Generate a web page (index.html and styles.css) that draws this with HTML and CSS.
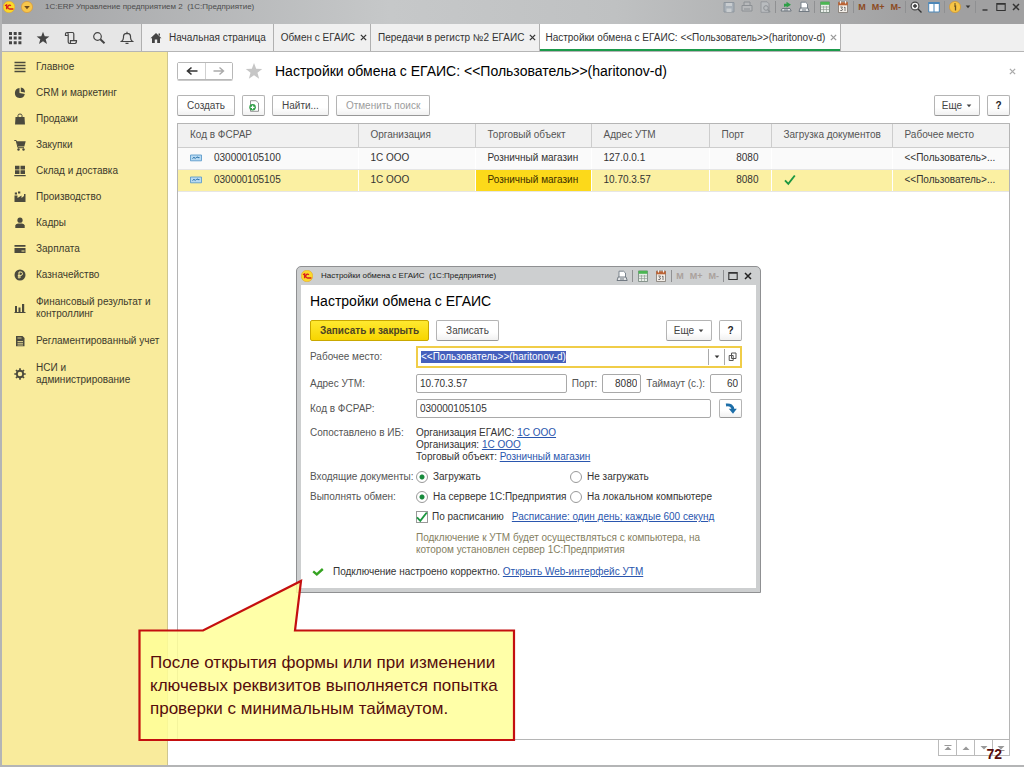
FILE: index.html
```html
<!DOCTYPE html>
<html lang="ru">
<head>
<meta charset="utf-8">
<title>1С:ERP Управление предприятием 2</title>
<link rel="stylesheet" href="styles.css">
</head>
<body>
<svg class="defs" aria-hidden="true">
  <symbol id="logo" viewBox="0 0 12 12"><circle cx="6" cy="6" r="5.8" fill="#fbd92a" stroke="#e8a92c" stroke-width=".6"/><path d="M2 4.8 3.6 3.8V8.3M7.9 4.7A1.9 1.9 0 1 0 6.6 8H10.4" fill="none" stroke="#d8201c" stroke-width="1.3"/></symbol>
  <symbol id="drop" viewBox="0 0 12 12"><circle cx="6" cy="6" r="5.6" fill="#f7c64a" stroke="#d99a3a" stroke-width=".7"/><path d="M3.2 5h5.6L6 8.2z" fill="#6b4a1c"/></symbol>
  <symbol id="apps" viewBox="0 0 14 14"><path d="M1 1h3v3H1zM5.7 1h3v3h-3zM10.4 1h3v3h-3zM1 5.6h3v3H1zM5.7 5.6h3v3h-3zM10.4 5.6h3v3h-3zM1 10.2h3v3H1zM5.7 10.2h3v3h-3zM10.4 10.2h3v3h-3z" fill="#444"/></symbol>
  <symbol id="star" viewBox="0 0 14 14"><path d="M7 .8 8.7 5.3l4.7.1-3.7 2.9 1.3 4.7L7 10.3 3 13l1.300-4.700L.6 5.400l4.700-.1z" fill="currentColor"/></symbol>
  <symbol id="scroll" viewBox="0 0 14 14"><path d="M3.500 4.500H1.500V2.800Q1.500 1.500 3 1.500H8.500Q9.800 1.500 9.800 3V9.500M3 1.500Q4.200 1.800 4.200 3.200V11Q4.200 12.500 5.800 12.500H11Q12.500 12.300 12.500 9.700H6.500V11Q6.500 12.300 5.500 12.500" fill="none" stroke="#444" stroke-width="1.200"/></symbol>
  <symbol id="search" viewBox="0 0 14 14"><circle cx="5.500" cy="5.500" r="3.800" fill="none" stroke="#444" stroke-width="1.200"/><path d="m8.300 8.300 4.200 4" stroke="#444" stroke-width="2"/></symbol>
  <symbol id="bell" viewBox="0 0 14 14"><path d="M1.500 10.500Q3.500 9 3.500 6.500V5Q3.800 2.500 7 2.400 10.200 2.500 10.500 5V6.500Q10.500 9 12.500 10.500zM7 2.300V.8M5.500 12.300h3" fill="none" stroke="#444" stroke-width="1.200"/></symbol>
  <symbol id="home" viewBox="0 0 12 12"><path d="M6 1 11.500 6.300H10V11H7.200V7.500H4.800V11H2V6.300H.5zM8.500 1.500H10V4L8.500 2.800z" fill="#444"/></symbol>
  <symbol id="i-menu" viewBox="0 0 12 12"><path d="M.5 1.500h11M.5 4.500h11M.5 7.500h11M.5 10.500h11" stroke="#4b4a3d" stroke-width="1.500"/></symbol>
  <symbol id="i-pie" viewBox="0 0 12 12"><path d="M5.500 1A5 5 0 1 0 10.800 7L5.500 6zM6.800.6V4.800L11 5.500A5 5 0 0 0 6.800.6z" fill="#4b4a3d"/></symbol>
  <symbol id="i-bag" viewBox="0 0 12 12"><path d="M1.500 4h9l.5 7.500H1z" fill="#4b4a3d"/><path d="M4 6V2.500Q4 1 6 1T8 2.500V6" fill="none" stroke="#4b4a3d"/></symbol>
  <symbol id="i-cart" viewBox="0 0 12 12"><path d="M.3 1.500H2.200L4 8.700H10" fill="none" stroke="#4b4a3d"/><path d="M2.500 2.200h9.200L10.300 7.500H3.800z" fill="#4b4a3d"/><circle cx="4.500" cy="10.500" r="1.200" fill="#4b4a3d"/><circle cx="9.500" cy="10.500" r="1.200" fill="#4b4a3d"/></symbol>
  <symbol id="i-boxes" viewBox="0 0 12 12"><path d="M1 .8h4.500v3.700H1zM6.500.8H11v3.700H6.500zM1 5.300h4.500V9H1zM6.500 5.300H11V9H6.500zM.3 10h11.400v1.300H.3z" fill="#4b4a3d"/></symbol>
  <symbol id="i-factory" viewBox="0 0 12 12"><path d="M.5 11V4.500H3.500V7L7.500 4.500V7L10 5V3h1.500v8zM.8 1.500H3V3.500H.8zM4 .5H6.300V2.500H4z" fill="#4b4a3d"/></symbol>
  <symbol id="i-person" viewBox="0 0 12 12"><circle cx="6" cy="3.200" r="2.600" fill="#4b4a3d"/><path d="M1.300 11V8.500Q1.500 6.800 4 6.500H8Q10.500 6.800 10.700 8.500V11z" fill="#4b4a3d"/></symbol>
  <symbol id="i-card" viewBox="0 0 12 12"><path d="M.5 2h11v1.800H.5zM.5 5h11v5H.5z" fill="#4b4a3d"/><path d="M7.500 8h3" stroke="#f9eb9c"/></symbol>
  <symbol id="i-coin" viewBox="0 0 12 12"><circle cx="6" cy="6" r="5.500" fill="#4b4a3d"/><path d="M5 9.500V3H7Q8.500 3.200 8.500 4.700T7 6.400H3.800M3.800 8H7" fill="none" stroke="#f9eb9c"/></symbol>
  <symbol id="i-bars" viewBox="0 0 12 12"><path d="M1 4h2v6H1zM4.500 5.500h2V10h-2zM8 2h2.200v8H8zM.5 10h11v1H.5z" fill="#4b4a3d"/></symbol>
  <symbol id="i-calc" viewBox="0 0 12 12"><path d="M2 1h6.500L10.500 3v8.300H2z" fill="#4b4a3d"/><path d="M3.500 3h4M3.500 6.500h5.500M3.500 8.300h5.500M3.500 10h5.500" stroke="#f9eb9c" stroke-width=".8"/></symbol>
  <symbol id="i-gear" viewBox="0 0 12 12"><circle cx="6" cy="6" r="3.200" fill="none" stroke="#4b4a3d" stroke-width="1.900"/><path d="M6 .3v2M6 9.700v2M.3 6h2M9.700 6h2M2 2l1.400 1.400M8.600 8.600 10 10M10 2 8.600 3.400M3.400 8.600 2 10" stroke="#4b4a3d" stroke-width="1.700"/></symbol>
  <symbol id="arrow-l" viewBox="0 0 12 10"><path d="M11.500 5H2M5.500 1.500 1.500 5l4 3.500" fill="none" stroke="currentColor" stroke-width="1.600"/></symbol>
  <symbol id="arrow-r" viewBox="0 0 12 10"><path d="M.5 5H10M6.500 1.500l4 3.500-4 3.500" fill="none" stroke="currentColor" stroke-width="1.400"/></symbol>
  <symbol id="doc-add" viewBox="0 0 12 12"><path d="M2.500.7H8L10.500 3v8.300h-8z" fill="#fff" stroke="#777" stroke-width=".8"/><circle cx="4.600" cy="7.300" r="3.300" fill="#2f9f47"/><path d="M4.600 5.400v3.800M2.700 7.300h3.800" stroke="#fff" stroke-width="1.200"/></symbol>
  <symbol id="record" viewBox="0 0 12 8"><path d="M.5 1h11v5.800H.5z" fill="#b8daf2" stroke="#5f9ccc" stroke-width=".9"/><path d="M2.500 4.500 4 3.300 5.300 4.500 7 2.800 8 3.600H9.500" fill="none" stroke="#2870a8"/></symbol>
  <symbol id="tick" viewBox="0 0 12 12"><path d="m1 6.300 3.300 3.500L10.800 1.500" fill="none" stroke="#1d9741" stroke-width="1.900"/></symbol>
  <symbol id="tick-bold" viewBox="0 0 12 12"><path d="m1.200 5.300 3.600 3L10.800 3" fill="none" stroke="#35a321" stroke-width="2.400"/></symbol>
  <symbol id="save" viewBox="0 0 12 12"><path d="M1 1.500h10v9.500H1z" fill="#a8b0b8" stroke="#8e969e"/><path d="M3 2h6v3H3zM3.500 7.500h5V11h-5z" fill="#c9cdd0"/></symbol>
  <symbol id="print" viewBox="0 0 12 12"><path d="M3 1h6v3.500h2V10H1V4.500h2zM3 4.500h6M3 8h6" fill="#b7b9bb" stroke="#8c9094"/></symbol>
  <symbol id="preview" viewBox="0 0 12 12"><path d="M2 .8h6l2 2v8.500H2z" fill="#b9bcbf" stroke="#8d9195" stroke-width=".8"/><circle cx="7" cy="7" r="2.300" fill="none" stroke="#8d9195"/><path d="m8.800 8.800 2.400 2.400" stroke="#8d9195" stroke-width="1.300"/></symbol>
  <symbol id="link-up" viewBox="0 0 12 12"><path d="M4 6V2.800h2.500V.8L11 3.800 6.500 6.500V5" fill="#2e9f48"/><path d="M1 10 2.200 7.500H10L11.200 10zM4 9h4" fill="#e3e5e7" stroke="#666f78" stroke-width=".9"/></symbol>
  <symbol id="link-doc" viewBox="0 0 12 12"><path d="M3 7V1.200h4.500L9.500 3v4" fill="#fff" stroke="#707a84" stroke-width=".9"/><path d="M1 10.500 2.200 7H10L11.200 10.500zM4 9h4" fill="#e3e5e7" stroke="#666f78" stroke-width=".9"/></symbol>
  <symbol id="table" viewBox="0 0 12 12"><path d="M1.500 1h9v10.500h-9z" fill="#e9efe9" stroke="#718078" stroke-width=".8"/><path d="M1.500.8h9v3h-9z" fill="#4bb653"/><path d="M4.500 5v6M7.500 5v6M2 6h8M2 8.500h8" stroke="#89948d" stroke-width=".6"/></symbol>
  <symbol id="calendar" viewBox="0 0 12 12"><path d="M1.500 1h9v10.500h-9z" fill="#f3eee8" stroke="#7e7670" stroke-width=".8"/><path d="M1.200 1.300h9.600v3H1.200z" fill="#ba6335"/><path d="M3.500 0v2.500M8.500 0v2.500" stroke="#eee"/><path d="M3.300 6H5.500L4.500 7.500 5.500 8 5 9.500H3.300M7 6.700 8 6V10" fill="none" stroke="#555" stroke-width=".8"/></symbol>
  <symbol id="zoom-in" viewBox="0 0 12 12"><circle cx="5" cy="5" r="3.900" fill="#eee" stroke="#444" stroke-width="1.100"/><path d="M5 3v4M3 5h4M8 8l3.500 3.500" stroke="#333" stroke-width="1.400"/></symbol>
  <symbol id="panels" viewBox="0 0 12 12"><path d="M.7 1.500h10.600v9.500H.7z" fill="#fff" stroke="#4c87b8"/><path d="M.5 1h11v2H.5zM5.500 2h1v9h-1z" fill="#4c87b8"/></symbol>
  <symbol id="info" viewBox="0 0 12 12"><circle cx="6" cy="6" r="5.600" fill="#f6c445" stroke="#cf9634" stroke-width=".7"/><path d="M5.200 5h1.300v4.500M6 2.300v1.500" fill="none" stroke="#685020" stroke-width="1.300"/></symbol>
  <symbol id="max" viewBox="0 0 10 10"><path d="M.8 1.500h8.400v7H.8zM.8 2.200h8.400" fill="none" stroke="#333" stroke-width="1.100"/></symbol>
  <symbol id="cross" viewBox="0 0 8 8"><path d="m1 1 6 6M7 1 1 7" stroke="currentColor" stroke-width="1.500"/></symbol>
  <symbol id="min" viewBox="0 0 10 10"><path d="M2.500 8h5" stroke="#333" stroke-width="1.400"/></symbol>
  <symbol id="caret" viewBox="0 0 6 4"><path d="M.7.5h4.600L3 3.300z" fill="currentColor"/></symbol>
  <symbol id="open" viewBox="0 0 10 10"><path d="M3.500 1h4.500v5.500H3.500zM1.200 3.500h4v5h-4z" fill="#fff" stroke="#555"/></symbol>
  <symbol id="turn" viewBox="0 0 12 12"><path d="M1 2Q7.500 1 8 7" fill="none" stroke="#1c6ea8" stroke-width="2.800"/><path d="M3.800 5.800h8L8 10.800z" fill="#1c6ea8"/></symbol>
  <symbol id="nav-up" viewBox="0 0 8 8"><path d="M4 2.500 7.500 6h-7z" fill="#999"/></symbol>
  <symbol id="nav-down" viewBox="0 0 8 8"><path d="M4 5.500 7.500 2h-7z" fill="#999"/></symbol>
  <symbol id="nav-top" viewBox="0 0 8 8"><path d="M4 2.500 7.500 6h-7zM.5 1h7v1h-7z" fill="#999"/></symbol>
  <symbol id="nav-end" viewBox="0 0 8 8"><path d="M4 5.500 7.500 2h-7zM.5 6h7v1h-7z" fill="#999"/></symbol>
</svg>

<div class="app">
  <header class="titlebar">
    <svg class="ic12"><use href="#logo"/></svg>
    <button class="bare" aria-label="Главное меню"><svg class="ic12"><use href="#drop"/></svg></button>
    <span class="titlebar-text">1С:ERP Управление предприятием 2&nbsp; (1С:Предприятие)</span>
    <div class="tools">
      <button class="bare" aria-label="Сохранить"><svg class="ic12"><use href="#save"/></svg></button>
      <button class="bare" aria-label="Печать"><svg class="ic12"><use href="#print"/></svg></button>
      <button class="bare" aria-label="Просмотр"><svg class="ic12"><use href="#preview"/></svg></button>
      <i class="sep"></i>
      <button class="bare" aria-label="Перейти по ссылке"><svg class="ic12"><use href="#link-up"/></svg></button>
      <button class="bare" aria-label="Получить ссылку"><svg class="ic12"><use href="#link-doc"/></svg></button>
      <i class="sep"></i>
      <button class="bare" aria-label="Калькулятор"><svg class="ic12"><use href="#table"/></svg></button>
      <button class="bare" aria-label="Календарь"><svg class="ic12"><use href="#calendar"/></svg></button>
      <i class="sep"></i>
      <span class="memory"><button class="bare">M</button><button class="bare">M+</button><button class="bare">M-</button></span>
      <i class="sep"></i>
      <button class="bare" aria-label="Масштаб"><svg class="ic12"><use href="#zoom-in"/></svg></button>
      <button class="bare" aria-label="Панели"><svg class="ic12"><use href="#panels"/></svg></button>
      <i class="sep"></i>
      <button class="bare info" aria-label="О программе"><svg class="ic12"><use href="#info"/></svg><svg class="caret"><use href="#caret"/></svg></button>
      <i class="sep"></i>
      <button class="bare" aria-label="Свернуть"><svg class="ic10"><use href="#min"/></svg></button>
      <button class="bare" aria-label="Развернуть"><svg class="ic10"><use href="#max"/></svg></button>
      <button class="bare" aria-label="Закрыть"><svg class="ic8"><use href="#cross"/></svg></button>
    </div>
  </header>

  <nav class="tabs">
    <div class="quick">
      <button class="bare" aria-label="Функции"><svg class="ic14"><use href="#apps"/></svg></button>
      <button class="bare" aria-label="Избранное"><svg class="ic14"><use href="#star"/></svg></button>
      <button class="bare" aria-label="История"><svg class="ic14"><use href="#scroll"/></svg></button>
      <button class="bare" aria-label="Поиск"><svg class="ic14"><use href="#search"/></svg></button>
      <button class="bare" aria-label="Оповещения"><svg class="ic14"><use href="#bell"/></svg></button>
    </div>
    <a class="tab tab-home" href="#"><svg class="ic12"><use href="#home"/></svg>Начальная страница</a>
    <a class="tab" href="#">Обмен с ЕГАИС<svg class="tab-x"><use href="#cross"/></svg></a>
    <a class="tab" href="#">Передачи в регистр №2 ЕГАИС<svg class="tab-x"><use href="#cross"/></svg></a>
    <a class="tab tab-active" href="#">Настройки обмена с ЕГАИС: &lt;&lt;Пользователь&gt;&gt;(haritonov-d)<svg class="tab-x"><use href="#cross"/></svg></a>
  </nav>

  <div class="work">
    <aside class="sidebar">
      <a class="section" href="#"><svg class="ic12"><use href="#i-menu"/></svg>Главное</a>
      <a class="section" href="#"><svg class="ic12"><use href="#i-pie"/></svg>CRM и маркетинг</a>
      <a class="section" href="#"><svg class="ic12"><use href="#i-bag"/></svg>Продажи</a>
      <a class="section" href="#"><svg class="ic12"><use href="#i-cart"/></svg>Закупки</a>
      <a class="section" href="#"><svg class="ic12"><use href="#i-boxes"/></svg>Склад и доставка</a>
      <a class="section" href="#"><svg class="ic12"><use href="#i-factory"/></svg>Производство</a>
      <a class="section" href="#"><svg class="ic12"><use href="#i-person"/></svg>Кадры</a>
      <a class="section" href="#"><svg class="ic12"><use href="#i-card"/></svg>Зарплата</a>
      <a class="section" href="#"><svg class="ic12"><use href="#i-coin"/></svg>Казначейство</a>
      <a class="section section-tall" href="#"><svg class="ic12"><use href="#i-bars"/></svg>Финансовый результат и контроллинг</a>
      <a class="section" href="#"><svg class="ic12"><use href="#i-calc"/></svg>Регламентированный учет</a>
      <a class="section section-tall" href="#"><svg class="ic12"><use href="#i-gear"/></svg>НСИ и<br>администрирование</a>
    </aside>

    <main class="page">
      <div class="page-head">
        <div class="history"><button aria-label="Назад"><svg class="arrow"><use href="#arrow-l"/></svg></button><button aria-label="Вперед" disabled><svg class="arrow"><use href="#arrow-r"/></svg></button></div>
        <svg class="fav"><use href="#star"/></svg>
        <h1>Настройки обмена с ЕГАИС: &lt;&lt;Пользователь&gt;&gt;(haritonov-d)</h1>
        <button class="bare page-x" aria-label="Закрыть страницу"><svg class="ic8"><use href="#cross"/></svg></button>
      </div>
      <div class="commands">
        <button class="btn">Создать</button>
        <button class="btn btn-icon" aria-label="Создать копированием"><svg class="ic12"><use href="#doc-add"/></svg></button>
        <button class="btn">Найти...</button>
        <button class="btn" disabled>Отменить поиск</button>
        <span class="grow"></span>
        <button class="btn btn-more">Еще<svg class="caret"><use href="#caret"/></svg></button>
        <button class="btn btn-help">?</button>
      </div>
      <div class="list">
        <table>
          <colgroup><col class="c-code"><col class="c-org"><col class="c-obj"><col class="c-addr"><col class="c-port"><col class="c-load"><col class="c-place"></colgroup>
          <thead>
            <tr><th>Код в ФСРАР</th><th>Организация</th><th>Торговый объект</th><th>Адрес УТМ</th><th>Порт</th><th>Загрузка документов</th><th>Рабочее место</th></tr>
          </thead>
          <tbody>
            <tr><td><span class="code"><svg><use href="#record"/></svg>030000105100</span></td><td>1С ООО</td><td>Розничный магазин</td><td>127.0.0.1</td><td class="num">8080</td><td></td><td>&lt;&lt;Пользователь&gt;...</td></tr>
            <tr class="selected"><td><span class="code"><svg><use href="#record"/></svg>030000105105</span></td><td>1С ООО</td><td class="current">Розничный магазин</td><td>10.70.3.57</td><td class="num">8080</td><td><svg class="ic12"><use href="#tick"/></svg></td><td>&lt;&lt;Пользователь&gt;...</td></tr>
          </tbody>
        </table>
      </div>
      <div class="pager">
        <button aria-label="В начало"><svg class="ic8"><use href="#nav-top"/></svg></button><button aria-label="Вверх"><svg class="ic8"><use href="#nav-up"/></svg></button><button aria-label="Вниз"><svg class="ic8"><use href="#nav-down"/></svg></button><button aria-label="В конец"><svg class="ic8"><use href="#nav-end"/></svg></button>
      </div>
    </main>
  </div>
</div>

<section class="dialog" role="dialog" aria-labelledby="dialog-title">
  <header class="dialog-bar">
    <svg class="ic12"><use href="#logo"/></svg>
    <span class="dialog-caption">Настройки обмена с ЕГАИС&nbsp; (1С:Предприятие)</span>
    <div class="tools">
      <button class="bare" aria-label="Получить ссылку"><svg class="ic12"><use href="#link-doc"/></svg></button>
      <i class="sep"></i>
      <button class="bare" aria-label="Калькулятор"><svg class="ic12"><use href="#table"/></svg></button>
      <button class="bare" aria-label="Календарь"><svg class="ic12"><use href="#calendar"/></svg></button>
      <i class="sep"></i>
      <span class="memory memory-off"><button class="bare">M</button><button class="bare">M+</button><button class="bare">M-</button></span>
      <i class="sep"></i>
      <button class="bare" aria-label="Развернуть окно"><svg class="ic10"><use href="#max"/></svg></button>
      <button class="bare" aria-label="Закрыть окно"><svg class="ic8"><use href="#cross"/></svg></button>
    </div>
  </header>
  <form class="form">
    <h2 id="dialog-title">Настройки обмена с ЕГАИС</h2>
    <div class="form-commands">
      <button type="button" class="btn btn-primary">Записать и закрыть</button>
      <button type="button" class="btn">Записать</button>
      <span class="grow"></span>
      <button type="button" class="btn btn-more">Еще<svg class="caret"><use href="#caret"/></svg></button>
      <button type="button" class="btn btn-help">?</button>
    </div>
    <div class="row row-place">
      <label class="label" for="place">Рабочее место:</label>
      <div class="combo">
        <input id="place" value="&lt;&lt;Пользователь&gt;&gt;(haritonov-d)" spellcheck="false">
        <button type="button" aria-label="Выбрать"><svg class="caret"><use href="#caret"/></svg></button>
        <button type="button" aria-label="Открыть"><svg class="ic10"><use href="#open"/></svg></button>
      </div>
    </div>
    <div class="row">
      <label class="label" for="addr">Адрес УТМ:</label>
      <input class="field field-wide" id="addr" value="10.70.3.57">
      <label class="inline-label" for="port">Порт:</label>
      <input class="field field-port" id="port" value="8080">
      <label class="inline-label" for="timeout">Таймаут (с.):</label>
      <input class="field field-time" id="timeout" value="60">
    </div>
    <div class="row">
      <label class="label" for="fsrar">Код в ФСРАР:</label>
      <input class="field field-wide" id="fsrar" value="030000105105">
      <button type="button" class="btn btn-turn" aria-label="Заполнить"><svg class="ic12"><use href="#turn"/></svg></button>
    </div>
    <div class="row row-match">
      <span class="label">Сопоставлено в ИБ:</span>
      <div class="match">
        <div>Организация ЕГАИС: <a href="#">1С ООО</a></div>
        <div>Организация: <a href="#">1С ООО</a></div>
        <div>Торговый объект: <a href="#">Розничный магазин</a></div>
      </div>
    </div>
    <div class="row row-choice" role="radiogroup" aria-label="Входящие документы">
      <span class="label">Входящие документы:</span>
      <label class="option"><input type="radio" name="docs" checked>Загружать</label>
      <label class="option"><input type="radio" name="docs">Не загружать</label>
    </div>
    <div class="row row-choice" role="radiogroup" aria-label="Выполнять обмен">
      <span class="label">Выполнять обмен:</span>
      <label class="option"><input type="radio" name="run" checked>На сервере 1С:Предприятия</label>
      <label class="option"><input type="radio" name="run">На локальном компьютере</label>
    </div>
    <div class="row row-choice">
      <span class="label"></span>
      <label class="check"><span class="box"><input type="checkbox" checked><svg class="ic12"><use href="#tick"/></svg></span>По расписанию</label>
      <a href="#">Расписание: один день; каждые 600 секунд</a>
    </div>
    <div class="row row-hint">
      <span class="label"></span>
      <p class="hint">Подключение к УТМ будет осуществляться с компьютера, на котором установлен сервер 1С:Предприятия</p>
    </div>
    <div class="row row-status">
      <svg class="ic12"><use href="#tick-bold"/></svg>
      <span>Подключение настроено корректно. <a href="#">Открыть Web-интерфейс УТМ</a></span>
    </div>
  </form>
</section>

<aside class="callout">
  <svg viewBox="0 0 378 164"><path d="M1.500 52.500H65L163 3 157 52.500H376V162H1.500z" fill="#ffff99" fill-opacity=".85" stroke="#c40f0f" stroke-width="2.200"/></svg>
  <p>После открытия формы или при изменении ключевых реквизитов выполняется попытка проверки с минимальным таймаутом.</p>
</aside>
<span class="slide-number">72</span>
<script src="app.js"></script>
</body>
</html>
```

FILE: styles.css
```css
* { box-sizing: border-box; }
html, body { height: 100%; }
body {
  margin: 0;
  font: 10px/12px "Liberation Sans", Arial, sans-serif;
  color: #333;
  background: #fff;
  overflow: hidden;
  position: relative;
}
button, input { font: inherit; color: inherit; margin: 0; }
a { color: #2a56ae; }
.defs { display: none; }
svg { display: block; flex: none; }
.ic8 { width: 8px; height: 8px; }
.ic10 { width: 10px; height: 10px; }
.ic12 { width: 12px; height: 12px; }
.ic14 { width: 14px; height: 14px; }
.caret { width: 6px; height: 4px; }
.grow { flex: 1; }
.bare { border: 0; background: none; padding: 0; display: flex; align-items: center; }

.app {
  height: 100%;
  display: flex;
  flex-direction: column;
  border-left: 2px solid #b4b5b6;
  border-bottom: 2px solid #b4b5b6;
}
.titlebar {
  height: 24px;
  flex: none;
  display: flex;
  align-items: flex-start;
  gap: 6px;
  padding: 1px 4px 0 1px;
  background: linear-gradient(90deg, #a3a4a6, #c6c8c9 38%, #bfc1c2 60%, #a0a0a1 90%);
}
.titlebar-text { margin-left: 6px; font-size: 8px; color: #4c4c4c; }
.tools { margin-left: auto; display: flex; align-items: center; gap: 6px; }
.sep { width: 1px; height: 12px; margin: 0 -2px; background: #8f9092; }
.memory { display: flex; gap: 6px; font-size: 9px; color: #8c4a22; font-weight: bold; }
.memory-off { color: #aaa19c; }
.info { gap: 4px; }

.tabs {
  height: 28px;
  flex: none;
  display: flex;
  background: #f0f0f0;
  border-bottom: 1px solid #b5b5b5;
}
.quick {
  display: flex;
  align-items: center;
  gap: 14px;
  width: 139px;
  padding-left: 6px;
  color: #444;
  background: #e6e6e6;
}
.tab {
  display: flex;
  align-items: center;
  gap: 5px;
  padding: 0 3px 0 7px;
  border-left: 1px solid #b0b0b0;
  color: #333;
  text-decoration: none;
  white-space: nowrap;
}
.tab-home { padding: 0 7px 0 8px; gap: 7px; }
.tab-x { width: 7px; height: 7px; }
.tab-active { background: #fff; border-right: 1px solid #b0b0b0; box-shadow: inset 0 -2px #1c9a4b; padding-left: 5px; }
.tab-active .tab-x { color: #999; }

.work { flex: 1; display: flex; min-height: 0; }
.sidebar {
  width: 166px;
  flex: none;
  padding-top: 2px;
  background: #f9eb9c;
  border-right: 1px solid #cfc68f;
}
.section {
  display: flex;
  align-items: center;
  gap: 10px;
  padding: 7px 2px 7px 12px;
  color: #3c3a2c;
  text-decoration: none;
}
.section-tall { padding-top: 8px; padding-bottom: 8px; }

.page { flex: 1; min-width: 0; display: flex; flex-direction: column; padding: 9px 14px 9px 9px; }
.page-head { display: flex; align-items: center; height: 20px; }
.history { display: flex; border: 1px solid #b8b8b8; border-radius: 2px; box-shadow: 0 1px #c9c9c9; }
.history button { border: 0; background: #fff; width: 27px; height: 16px; padding: 0; display: flex; align-items: center; justify-content: center; color: #333; }
.history button + button { border-left: 1px solid #d0d0d0; color: #aaa; }
.arrow { width: 12px; height: 10px; }
.fav { width: 18px; height: 18px; margin: 0 12px; color: #c6c6c6; }
h1, h2 { margin: 0; font-weight: normal; font-size: 14px; line-height: 18px; color: #000; }
.page-x { margin-left: auto; margin-right: -6px; color: #aaa; }
.page-x svg { width: 7px; height: 7px; }

.commands, .form-commands { display: flex; gap: 7px; }
.commands { margin: 14px 0 7px; }
.btn {
  height: 21px;
  display: flex;
  align-items: center;
  justify-content: center;
  padding: 0 9px;
  border: 1px solid #b4b4b4;
  border-bottom-color: #989898;
  border-radius: 2px;
  background: linear-gradient(#fff 60%, #f1f1f1);
  color: #444;
}
.btn:disabled { color: #9c9c9c; }
.btn-icon { width: 23px; padding: 0; }
.btn-more { width: 46px; gap: 4px; padding: 0; }
.btn-help { width: 23px; padding: 0; font-weight: bold; color: #222; }
.btn-primary { background: linear-gradient(#ffe930, #f7d500); border-color: #c9a800; font-weight: bold; color: #4d4424; }

.list { flex: 1; min-height: 0; border: 1px solid #b5b5b5; }
table { width: 100%; table-layout: fixed; border-collapse: collapse; }
.c-code { width: 180px; }
.c-org { width: 117px; }
.c-obj { width: 116px; }
.c-addr { width: 118px; }
.c-port { width: 62px; }
.c-load { width: 121px; }
.c-place { width: auto; }
th {
  height: 23px;
  padding: 0 12px;
  text-align: left;
  font-weight: normal;
  color: #555;
  background: #f1f1f1;
  border-bottom: 1px solid #cdcdcd;
  white-space: nowrap;
}
th + th { border-left: 1px solid #cdcdcd; }
td { height: 22px; padding: 0 12px; background: #fafafa; border-bottom: 1px solid #e6e6e6; white-space: nowrap; }
td + td { border-left: 1px solid #fff; }
.selected td { background: #fbf0a2; }
.selected .current { background: #fcd91a; color: #3b2f00; }
.num { text-align: right; }
.code { display: flex; align-items: center; gap: 12px; }
.code svg { width: 12px; height: 8px; }

.pager { display: flex; justify-content: flex-end; }
.pager button { width: 18px; height: 16px; padding: 0; display: flex; align-items: center; justify-content: center; background: #fff; border: 1px solid #bbb; border-width: 0 0 1px 1px; }
.pager button:last-child { border-right-width: 1px; }

.dialog {
  position: absolute;
  left: 296px;
  top: 266px;
  width: 465px;
  padding: 0 4px 4px;
  border: 1px solid #8f9092;
  border-radius: 5px 5px 0 0;
  background: #cdcfd0;
}
.dialog-bar { height: 18px; display: flex; align-items: center; gap: 8px; padding-right: 4px; color: #222; }
.dialog-caption { font-size: 8px; }
.form { background: #fff; padding: 7px 14px 9px 9px; }
.form-commands { margin: 10px 0 5px; }
.row { display: flex; align-items: center; margin-top: 6px; }
.row-place { margin-top: 5px; }
.label { width: 106px; flex: none; color: #555; white-space: nowrap; }
.inline-label { margin: 0 5px; color: #555; white-space: nowrap; }
.combo { flex: 1; min-width: 0; height: 22px; display: flex; border: 2px solid #f0cd48; }
.combo input { flex: 1; min-width: 0; border: 0; outline: 0; padding: 0 3px; background: #fff; }
.combo input::selection { background: #4560bd; color: #fff; }
.combo button { width: 16px; padding: 0; margin: 1px 0; display: flex; align-items: center; justify-content: center; border: 0; border-left: 1px solid #aaa; background: #fff; }
.field { height: 19px; padding: 0 3px; border: 1px solid #a9a9a9; border-radius: 2px; background: #fff; }
.field-wide { flex: 1; min-width: 0; }
.field-port { width: 39px; text-align: right; }
.field-time { width: 32px; text-align: right; }
.btn-turn { width: 23px; height: 19px; margin-left: 8px; padding: 0; }
.row-match { align-items: flex-start; margin: 9px 0 7px; }
.row-choice { height: 14px; }
.option { width: 154px; display: flex; align-items: center; gap: 5px; white-space: nowrap; }
.option input { appearance: none; width: 12px; height: 12px; border: 1px solid #999; border-radius: 50%; background: #fff; }
.option input:checked { background: radial-gradient(circle, #178a3c 0 2px, #fff 3px); }
.row-match + .row-choice { margin-top: 0; }
.check { display: flex; align-items: center; gap: 4px; margin-right: 8px; white-space: nowrap; }
.box { display: grid; }
.box > * { grid-area: 1 / 1; }
.box input { appearance: none; width: 12px; height: 12px; border: 1px solid #999; background: #fff; }
.box svg { pointer-events: none; }
.row-hint { margin-top: 8px; align-items: flex-start; }
.hint { margin: 0; max-width: 300px; color: #85805f; }
.row-status { margin-top: 9px; height: 14px; gap: 9px; padding-left: 2px; }

.callout { position: absolute; left: 138px; top: 578px; width: 378px; height: 164px; }
.callout svg { width: 378px; height: 164px; }
.callout p { position: absolute; left: 12px; top: 73px; width: 360px; margin: 0; font-size: 17px; line-height: 23px; color: #560c0c; }
.slide-number { position: absolute; right: 22px; bottom: 5px; font-size: 14px; line-height: 16px; font-weight: bold; color: #560c0c; }
```

FILE: app.js
```js
const place = document.getElementById("place");
place.focus();
place.select();
```
